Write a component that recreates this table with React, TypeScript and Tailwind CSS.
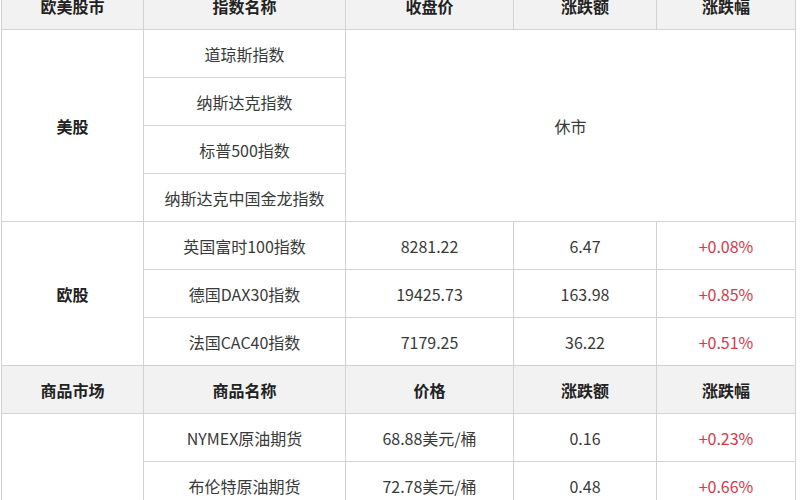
import React from "react";

const td = "border border-[#d2d2d2] text-center align-middle h-[48px] p-0";
const th = "border border-[#d2d2d2] text-center align-middle h-[48px] p-0 bg-[#f2f2f2] font-bold text-[#222]";
const red = "text-[#dc3545]";

export default function App() {
  return (
    <div
      className="w-[800px] h-[500px] overflow-hidden bg-white text-[16px] text-[#3a3a3a]"
      style={{ fontFamily: '"Noto Sans CJK SC", "Noto Sans", sans-serif' }}
    >
      <table className="table-fixed border-collapse w-[794px] mt-[-19px] ml-[1px]">
        <colgroup>
          <col className="w-[142px]" />
          <col className="w-[202px]" />
          <col className="w-[168px]" />
          <col className="w-[143px]" />
          <col className="w-[139px]" />
        </colgroup>
        <tbody>
          <tr>
            <td className={th}>欧美股市</td>
            <td className={th}>指数名称</td>
            <td className={th}>收盘价</td>
            <td className={th}>涨跌额</td>
            <td className={th}>涨跌幅</td>
          </tr>
          <tr>
            <td className={`${td} font-bold text-[#222]`} rowSpan={4}>美股</td>
            <td className={td}>道琼斯指数</td>
            <td className={td} rowSpan={4} colSpan={3}>休市</td>
          </tr>
          <tr>
            <td className={td}>纳斯达克指数</td>
          </tr>
          <tr>
            <td className={td}>标普500指数</td>
          </tr>
          <tr>
            <td className={td}>纳斯达克中国金龙指数</td>
          </tr>
          <tr>
            <td className={`${td} font-bold text-[#222]`} rowSpan={3}>欧股</td>
            <td className={td}>英国富时100指数</td>
            <td className={td}>8281.22</td>
            <td className={td}>6.47</td>
            <td className={`${td} ${red}`}>+0.08%</td>
          </tr>
          <tr>
            <td className={td}>德国DAX30指数</td>
            <td className={td}>19425.73</td>
            <td className={td}>163.98</td>
            <td className={`${td} ${red}`}>+0.85%</td>
          </tr>
          <tr>
            <td className={td}>法国CAC40指数</td>
            <td className={td}>7179.25</td>
            <td className={td}>36.22</td>
            <td className={`${td} ${red}`}>+0.51%</td>
          </tr>
          <tr>
            <td className={th}>商品市场</td>
            <td className={th}>商品名称</td>
            <td className={th}>价格</td>
            <td className={th}>涨跌额</td>
            <td className={th}>涨跌幅</td>
          </tr>
          <tr>
            <td className={`${td} font-bold text-[#222]`} rowSpan={4}>原油</td>
            <td className={td}>NYMEX原油期货</td>
            <td className={td}>68.88美元/桶</td>
            <td className={td}>0.16</td>
            <td className={`${td} ${red}`}>+0.23%</td>
          </tr>
          <tr>
            <td className={td}>布伦特原油期货</td>
            <td className={td}>72.78美元/桶</td>
            <td className={td}>0.48</td>
            <td className={`${td} ${red}`}>+0.66%</td>
          </tr>
          <tr>
            <td className={td}>&nbsp;</td>
            <td className={td}>&nbsp;</td>
            <td className={td}>&nbsp;</td>
            <td className={td}>&nbsp;</td>
          </tr>
          <tr>
            <td className={td}>&nbsp;</td>
            <td className={td}>&nbsp;</td>
            <td className={td}>&nbsp;</td>
            <td className={td}>&nbsp;</td>
          </tr>
        </tbody>
      </table>
    </div>
  );
}
